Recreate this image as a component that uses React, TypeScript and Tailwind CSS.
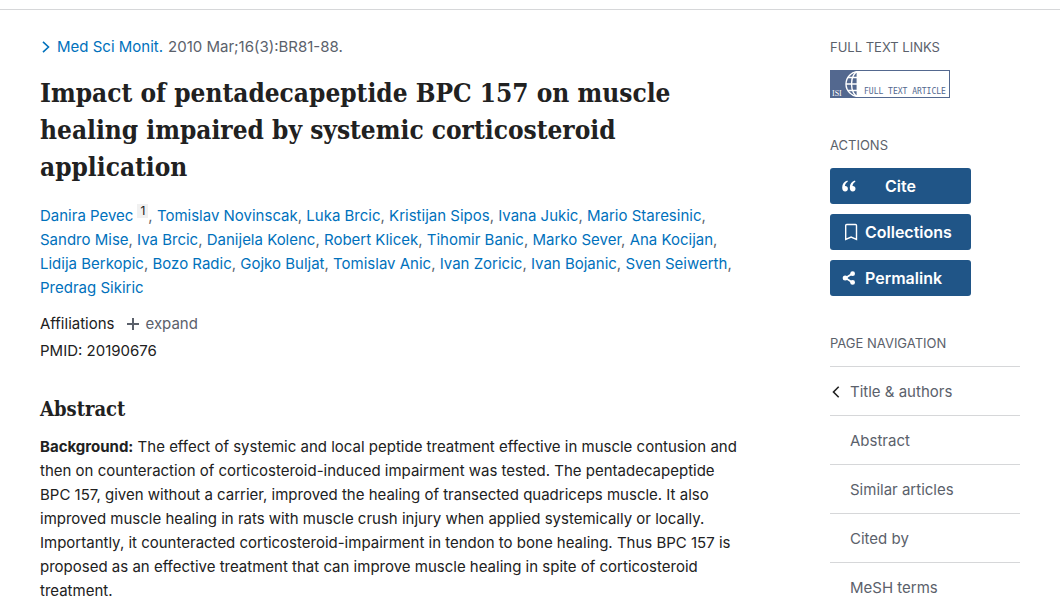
import { ReactNode, useState } from 'react';

const AUTHORS = [
  'Danira Pevec',
  'Tomislav Novinscak',
  'Luka Brcic',
  'Kristijan Sipos',
  'Ivana Jukic',
  'Mario Staresinic',
  'Sandro Mise',
  'Iva Brcic',
  'Danijela Kolenc',
  'Robert Klicek',
  'Tihomir Banic',
  'Marko Sever',
  'Ana Kocijan',
  'Lidija Berkopic',
  'Bozo Radic',
  'Gojko Buljat',
  'Tomislav Anic',
  'Ivan Zoricic',
  'Ivan Bojanic',
  'Sven Seiwerth',
  'Predrag Sikiric',
];

const SECTIONS = ['Title & authors', 'Abstract', 'Similar articles', 'Cited by', 'MeSH terms'];

function QuoteIcon() {
  return (
    <svg className="w-4 h-4 shrink-0" viewBox="0 0 16 16" fill="currentColor" aria-hidden="true">
      <path d="M6.4 2.4C3.2 3.2 1.2 5.8 1.2 9.4c0 2.4 1.1 4 3 4 1.6 0 2.7-1.1 2.7-2.7S5.8 8.1 4.3 8.1h-.4c.2-1.9 1.1-3.2 2.9-4.3z" />
      <path d="M14 2.4c-3.2.8-5.2 3.4-5.2 7 0 2.4 1.1 4 3 4 1.6 0 2.7-1.1 2.7-2.7s-1.1-2.6-2.6-2.6h-.4c.2-1.9 1.1-3.2 2.9-4.3z" />
    </svg>
  );
}

function BookmarkIcon() {
  return (
    <svg className="w-[18px] h-[18px] shrink-0" viewBox="0 0 18 18" fill="none" stroke="currentColor" strokeWidth="1.4" aria-hidden="true">
      <path d="M4.7 2.5a1 1 0 0 1 1-1h8.8a1 1 0 0 1 1 1v14l-5.4-2.5-5.4 2.5z" />
    </svg>
  );
}

function ShareIcon() {
  return (
    <svg className="w-4 h-4 shrink-0" viewBox="0 0 16 16" fill="currentColor" aria-hidden="true">
      <path d="M11.5 3.5 4.5 8l7 4.5" fill="none" stroke="currentColor" strokeWidth="1.7" />
      <circle cx="11.6" cy="3.7" r="2.4" />
      <circle cx="4.2" cy="8" r="2.5" />
      <circle cx="11.6" cy="12.4" r="2.4" />
    </svg>
  );
}

function FullTextLogo() {
  return (
    <svg className="block w-[120px] h-7" viewBox="0 0 120 28" role="img" aria-label="ISI full text article">
      <rect x="0.5" y="0.5" width="119" height="27" fill="#fff" stroke="#53688f" />
      <rect width="28" height="28" fill="#53688f" />
      <clipPath id="globe">
        <rect x="14" y="1" width="14" height="26" />
      </clipPath>
      <g clipPath="url(#globe)" fill="none" stroke="#fff" strokeWidth="1.4">
        <circle cx="28.5" cy="14" r="12.5" />
        <ellipse cx="28.5" cy="14" rx="7" ry="12.5" />
        <path d="M16 14h13M18 7.5h11M18 20.5h11M27.3 1v26" />
      </g>
      <text x="2" y="26" fontSize="8" fill="#fff" className="font-['Liberation_Serif',serif]">ISI</text>
      <text x="34" y="24" fontSize="8" fill="#53688f" className="font-['DejaVu_Sans_Mono',monospace]">
        FULL TEXT ARTICLE
      </text>
    </svg>
  );
}

function ActionButton({ icon, children, centered = false }: { icon: ReactNode; children: ReactNode; centered?: boolean }) {
  return (
    <button className="flex items-center w-[141px] h-9 px-[11px] rounded-[3px] bg-[#205587] text-white text-base font-semibold">
      <span className="w-6 shrink-0">{icon}</span>
      <span className={centered ? 'flex-1 text-center pr-6' : ''}>{children}</span>
    </button>
  );
}

function SideHeading({ children }: { children: ReactNode }) {
  return <h2 className="text-[13px] leading-5 text-[#5b616b] uppercase">{children}</h2>;
}

export default function App() {
  const [expanded, setExpanded] = useState(false);

  return (
    <div className="bg-white pt-[9px] font-['Inter',sans-serif] text-[15px] leading-6 text-[#212121]">
      <div className="flex justify-between gap-12 border-t border-[#d6d7d9] px-10 pt-[25px]">
        <main className="flex-1 max-w-[724px]">
          <div className="flex items-center text-[#5b616b]">
            <svg className="w-3 h-3 mr-[5px] text-[#0071bc]" viewBox="0 0 12 12" fill="none" stroke="currentColor" strokeWidth="1.6" aria-hidden="true">
              <path d="m3 .8 5.5 5.2L3 11.2" />
            </svg>
            <a href="#journal" className="text-[#0071bc]">Med Sci Monit.</a>
            <span className="ml-[5px]">2010 Mar;16(3):BR81-88.</span>
          </div>

          <h1 className="mt-4 max-w-[680px] font-['DejaVu_Serif_Condensed','DejaVu_Serif',serif] text-[26px] leading-[37px] font-bold">
            Impact of pentadecapeptide BPC 157 on muscle healing impaired by systemic corticosteroid application
          </h1>

          <div className="mt-[18px] text-[#5b616b]">
            {AUTHORS.map((author, i) => (
              <span key={author}>
                <span className="whitespace-nowrap">
                  <a href="#author" className="text-[#0071bc]">{author}</a>
                  {i === 0 && (
                    <sup className="ml-1">
                      <a href="#affiliations" className="inline-block px-[3px] text-xs leading-[14px] bg-[#f1f1f1] text-[#212121]">1</a>
                    </sup>
                  )}
                  {i < AUTHORS.length - 1 && ','}
                </span>{' '}
              </span>
            ))}
          </div>

          <div className="mt-3 flex items-center">
            <span>Affiliations</span>
            <button
              aria-expanded={expanded}
              onClick={() => setExpanded(!expanded)}
              className="ml-3 flex items-center gap-[7px] text-[#5b616b]"
            >
              <svg className="w-3 h-3" viewBox="0 0 12 12" fill="none" stroke="currentColor" strokeWidth="2" aria-hidden="true">
                <path d="M6 0v12M0 6h12" />
              </svg>
              expand
            </button>
          </div>
          <div className="mt-[3px]">PMID: 20190676</div>

          <h2 className="mt-[34px] font-['DejaVu_Serif_Condensed','DejaVu_Serif',serif] text-xl leading-6 font-bold">Abstract</h2>
          <p className="mt-[14px] max-w-[700px]">
            <strong className="font-bold">Background:</strong> The effect of systemic and local peptide treatment effective in
            muscle contusion and then on counteraction of corticosteroid-induced impairment was tested. The pentadecapeptide
            BPC 157, given without a carrier, improved the healing of transected quadriceps muscle. It also improved muscle
            healing in rats with muscle crush injury when applied systemically or locally. Importantly, it counteracted
            corticosteroid-impairment in tendon to bone healing. Thus BPC 157 is proposed as an effective treatment that can
            improve muscle healing in spite of corticosteroid treatment.
          </p>
        </main>

        <aside className="w-[190px] shrink-0 pt-[2px]">
          <SideHeading>Full text links</SideHeading>
          <a href="#full-text" className="mt-[13px] block">
            <FullTextLogo />
          </a>

          <div className="mt-[37px]">
            <SideHeading>Actions</SideHeading>
            <div className="mt-[13px] flex flex-col gap-[10px]">
              <ActionButton icon={<QuoteIcon />} centered>Cite</ActionButton>
              <ActionButton icon={<BookmarkIcon />}>Collections</ActionButton>
              <ActionButton icon={<ShareIcon />}>Permalink</ActionButton>
            </div>
          </div>

          <nav className="mt-[37px]">
            <SideHeading>Page navigation</SideHeading>
            <ul className="mt-[13px]">
              {SECTIONS.map((section, i) => (
                <li key={section} className="border-t border-[#d6d7d9]">
                  <a href="#section" className="flex items-center pt-[13px] pb-[11px] text-[#5b616b]">
                    <span className="w-5 pl-[2px]">
                      {i === 0 && (
                        <svg className="w-2 h-3 text-[#212121]" viewBox="0 0 8 12" fill="none" stroke="currentColor" strokeWidth="1.6" aria-hidden="true">
                          <path d="M6.7.8 1.5 6l5.2 5.2" />
                        </svg>
                      )}
                    </span>
                    {section}
                  </a>
                </li>
              ))}
            </ul>
          </nav>
        </aside>
      </div>
    </div>
  );
}
